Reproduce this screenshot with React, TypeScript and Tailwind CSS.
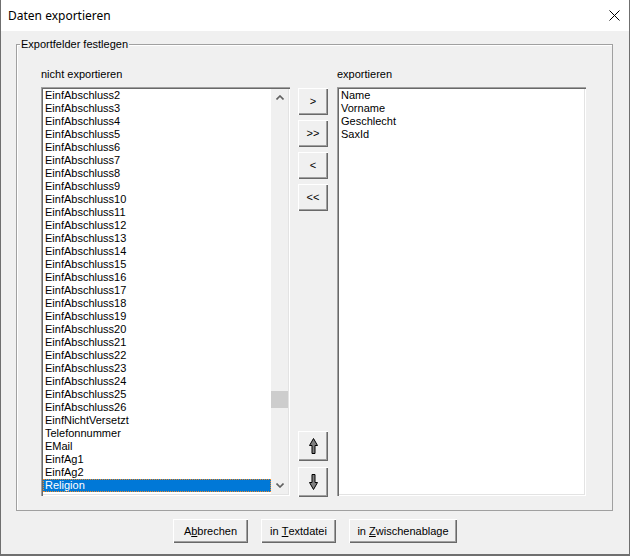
import React from 'react';

const available = [
  ...Array.from({ length: 25 }, (_, i) => `EinfAbschluss${i + 2}`),
  'EinfNichtVersetzt',
  'Telefonnummer',
  'EMail',
  'EinfAg1',
  'EinfAg2',
  'Religion',
];

const exported = ['Name', 'Vorname', 'Geschlecht', 'SaxId'];

const raised =
  'bg-[#f0f0f0] shadow-[inset_1px_1px_0_#ffffff,inset_-1px_-1px_0_#696969,inset_-2px_-2px_0_#a0a0a0] flex items-center justify-center text-black';
const sunken =
  'bg-white p-[2px] shadow-[inset_1px_1px_0_#a0a0a0,inset_2px_2px_0_#696969,inset_-1px_-1px_0_#ffffff,inset_-2px_-2px_0_#e3e3e3]';

const Arrow = ({ down }: { down?: boolean }) => (
  <svg width="9" height="16" viewBox="0 0 9 16" className={down ? 'rotate-180' : ''}>
    <polygon points="4.5,0.5 8.5,7.5 6,7.5 6,15.5 3,15.5 3,7.5 0.5,7.5" fill="#808080" stroke="#000" strokeWidth="1" />
  </svg>
);

const Chevron = ({ down }: { down?: boolean }) => (
  <svg width="8" height="5" viewBox="0 0 8 5" className={down ? 'rotate-180' : ''}>
    <polyline points="0.5,4.5 4,1 7.5,4.5" fill="none" stroke="#606060" strokeWidth="1.6" />
  </svg>
);

const App = () => {
  return (
    <div className="w-[630px] h-[556px] bg-[#f0f0f0] border-x border-b-2 border-[#6f6f6f] flex flex-col font-['Liberation_Sans',Arial,sans-serif] text-[11px] leading-[13px] text-black">
      {/* title bar */}
      <div className="h-[31px] bg-white flex items-center justify-between pl-[7px] pr-[9px] shrink-0">
        <span className="font-['Noto_Sans',sans-serif] text-[12px]">Daten exportieren</span>
        <svg width="11" height="11" viewBox="0 0 11 11">
          <path d="M0.5 0.5L10.5 10.5M10.5 0.5L0.5 10.5" stroke="#000" strokeWidth="1" />
        </svg>
      </div>

      <div className="pt-[13px] pl-[15px] pr-[16px]">
        {/* group box */}
        <div className="relative h-[467px] border border-[#a0a0a0] shadow-[inset_1px_1px_0_#ffffff]">
          <span className="absolute -top-[7px] left-[3px] px-[1px] bg-[#f0f0f0]">Exportfelder festlegen</span>
          <div className="flex items-start pt-[23px] pl-[24px]">
            <div className="flex flex-col gap-[6px]">
              <div className="h-[13px]">nicht exportieren</div>
              <div className={`${sunken} w-[249px] h-[409px] flex`}>
                <div className="flex-1 flex flex-col">
                  {available.map((item) => {
                    const sel = item === 'Religion';
                    return (
                      <div
                        key={item}
                        className={
                          sel
                            ? 'h-[13px] pl-[2px] bg-[#0078d7] text-white outline-1 outline-dotted outline-[#f08a24] -outline-offset-1'
                            : 'h-[13px] pl-[2px]'
                        }
                      >
                        {item}
                      </div>
                    );
                  })}
                </div>
                <div className="w-[17px] bg-[#f0f0f0] flex flex-col">
                  <div className="h-[17px] flex items-center justify-center">
                    <Chevron />
                  </div>
                  <div className="flex-1">
                    <div className="mt-[285px] h-[17px] bg-[#cdcdcd]" />
                  </div>
                  <div className="h-[17px] flex items-center justify-center">
                    <Chevron down />
                  </div>
                </div>
              </div>
            </div>

            <div className="ml-[8px] mt-[20px] h-[409px] w-[30px] flex flex-col justify-between">
              <div className="flex flex-col gap-[5px]">
                <button className={`${raised} h-[27px]`}>&gt;</button>
                <button className={`${raised} h-[27px]`}>&gt;&gt;</button>
                <button className={`${raised} h-[27px]`}>&lt;</button>
                <button className={`${raised} h-[27px]`}>&lt;&lt;</button>
              </div>
              <div className="flex flex-col gap-[6px]">
                <button className={`${raised} h-[30px]`}>
                  <Arrow />
                </button>
                <button className={`${raised} h-[30px]`}>
                  <Arrow down />
                </button>
              </div>
            </div>

            <div className="ml-[9px] flex flex-col gap-[6px]">
              <div className="h-[13px]">exportieren</div>
              <div className={`${sunken} w-[249px] h-[409px]`}>
                {exported.map((item) => (
                  <div key={item} className="h-[13px] pl-[2px]">
                    {item}
                  </div>
                ))}
              </div>
            </div>
          </div>
        </div>

        <div className="flex justify-center gap-[13px] mt-[8px] pl-[1px]">
          <button className={`${raised} w-[75px] h-[24px]`}>
            A<u>b</u>brechen
          </button>
          <button className={`${raised} w-[75px] h-[24px]`}>
            in&nbsp;<u>T</u>extdatei
          </button>
          <button className={`${raised} w-[108px] h-[24px]`}>
            in&nbsp;<u>Z</u>wischenablage
          </button>
        </div>
      </div>
    </div>
  );
};

export default App;
